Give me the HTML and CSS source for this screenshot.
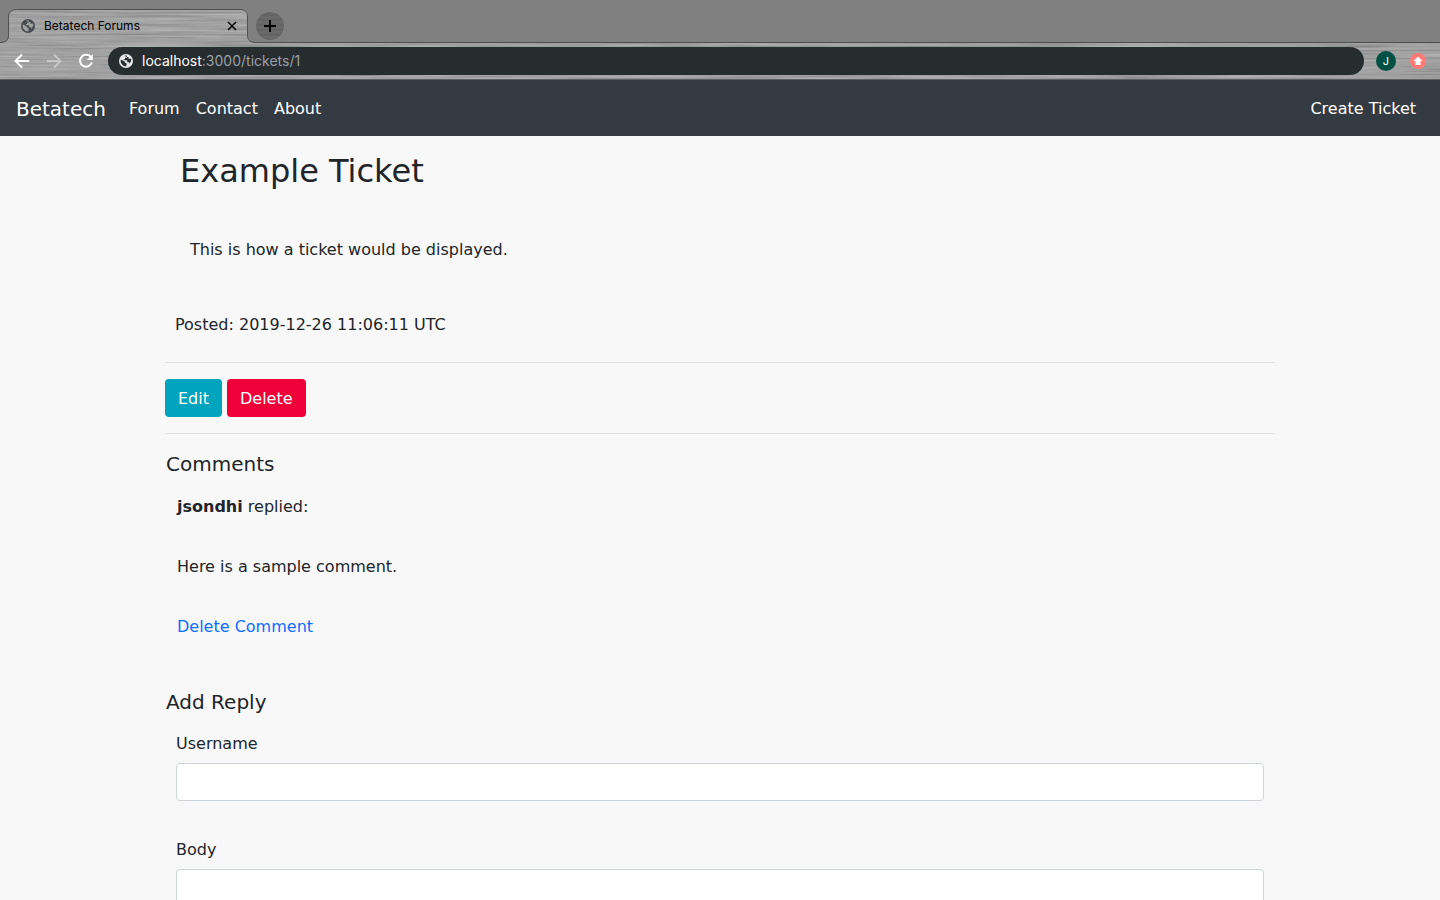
FILE: index.html
```html
<!DOCTYPE html>
<html lang="en">
<head>
<meta charset="utf-8">
<title>Betatech Forums</title>
<link rel="stylesheet" href="styles.css">
</head>
<body>
<div class="browser">
  <header class="chrome">
    <svg class="metal" aria-hidden="true">
      <filter id="brushed" x="0" y="0" width="100%" height="100%">
        <feTurbulence type="fractalNoise" baseFrequency="0.01 0.5" numOctaves="3" seed="4"/>
        <feColorMatrix type="matrix" values="0.34 0 0 0 0.38  0.34 0 0 0 0.38  0.34 0 0 0 0.38  0 0 0 0 1" color-interpolation-filters="sRGB"/>
      </filter>
      <rect width="100%" height="100%" filter="url(#brushed)"/>
    </svg>
    <div class="tabstrip">
      <div class="tab">
        <svg class="tab-shape" viewBox="0 0 256 34" aria-hidden="true">
          <path class="tab-cut" d="M0 0H256V33.5C251 33.5 248 31 248 26V8C248 3 245 .5 240 .5H17C12 .5 9 3 9 8V26C9 31 6 33.5 0 33.5Z"/>
          <path class="tab-line" d="M0 33.5C6 33.5 8.5 31 8.5 26V8C8.5 3 11.5 .5 16.5 .5H240C245 .5 247.5 3 247.5 8V26C247.5 31 250 33.5 256 33.5"/>
        </svg>
        <div class="tab-content">
          <svg class="globe" viewBox="0 0 14 14" aria-hidden="true"><circle cx="7" cy="7" r="7" fill="#494c51"/><path d="M2 5.5 5.5 7.5 6.5 9H7.5V12.3C4.5 12.5 1.8 10.2 1.6 7ZM5.2 1.9C7 1.2 8 1.4 8 1.9V3.8H6V5.2H4.8V6.3H8.2V8.2H10.2V9.8C11.9 8.4 12.6 6.5 12.1 4.8H9.6V3.3" fill="#a3a3a3"/></svg>
          <span class="tab-title">Betatech Forums</span>
          <button class="close" aria-label="Close tab"><svg viewBox="0 0 10 10"><path d="M1 1 9 9M9 1 1 9"/></svg></button>
        </div>
      </div>
      <div class="strip-rest">
        <button class="new-tab" aria-label="New tab"><svg viewBox="0 0 12 12"><path d="M6 0V12M0 6H12"/></svg></button>
      </div>
    </div>
    <div class="toolbar">
      <button class="tool" aria-label="Back"><svg viewBox="0 0 16 16"><path d="M15 8H2M8 1.5 1.5 8 8 14.5"/></svg></button>
      <button class="tool faded" aria-label="Forward"><svg viewBox="0 0 16 16"><path d="M1 8H14M8 1.5 14.5 8 8 14.5"/></svg></button>
      <button class="tool" aria-label="Reload"><svg viewBox="0 0 16 16"><path d="M13 4.2A6 6 0 1 0 13.8 9.5"/><path class="solid" d="M14.8 1V7H8.8Z"/></svg></button>
      <div class="address">
        <svg class="globe" viewBox="0 0 14 14" aria-hidden="true"><circle cx="7" cy="7" r="7" fill="#e8eaed"/><path d="M2 5.5 5.5 7.5 6.5 9H7.5V12.3C4.5 12.5 1.8 10.2 1.6 7ZM5.2 1.9C7 1.2 8 1.4 8 1.9V3.8H6V5.2H4.8V6.3H8.2V8.2H10.2V9.8C11.9 8.4 12.6 6.5 12.1 4.8H9.6V3.3" fill="#272c2f"/></svg>
        <span class="url">localhost<span class="path">:3000/tickets/1</span></span>
      </div>
      <button class="avatar" aria-label="Profile">J</button>
      <button class="update" aria-label="Update"><svg viewBox="0 0 16 16"><path d="M8 3.5 12.5 8H10.5V12H5.5V8H3.5Z"/></svg></button>
    </div>
  </header>
  <nav class="navbar">
    <a class="brand" href="#">Betatech</a>
    <a href="#">Forum</a>
    <a href="#">Contact</a>
    <a href="#">About</a>
    <a class="create" href="#">Create Ticket</a>
  </nav>
  <main class="page">
    <div class="container">
      <h1>Example Ticket</h1>
      <p class="ticket-body">This is how a ticket would be displayed.</p>
      <p class="posted">Posted: 2019-12-26 11:06:11 UTC</p>
      <div class="actions">
        <button class="btn edit">Edit</button>
        <button class="btn delete">Delete</button>
      </div>
      <h2>Comments</h2>
      <article class="comment">
        <p><strong>jsondhi</strong> replied:</p>
        <p>Here is a sample comment.</p>
        <p><a href="#">Delete Comment</a></p>
      </article>
      <h2>Add Reply</h2>
      <form class="reply">
        <label for="username">Username</label>
        <input id="username" type="text">
        <label for="body">Body</label>
        <textarea id="body" rows="3"></textarea>
      </form>
    </div>
  </main>
</div>
</body>
</html>
```
FILE: styles.css
```css
* { box-sizing: border-box; }
body {
  margin: 0;
  background: #f8f8f8;
  color: #212529;
  font: 16px/24px Verdana, "DejaVu Sans", sans-serif;
}
button { border: 0; padding: 0; background: none; font: inherit; color: inherit; }
p, h1, h2 { margin: 0; font-weight: 400; }

.browser { display: flex; flex-direction: column; height: 100vh; overflow: hidden; }

/* Browser frame */
.chrome {
  position: relative;
  flex: none;
  border-bottom: 1px solid #5d5e5f;
  background: #959595;
  font-family: Inter, Roboto, sans-serif;
}
.metal { position: absolute; inset: 0; width: 100%; height: 100%; }
.tabstrip { position: relative; display: flex; height: 43px; }
.tab { position: relative; width: 256px; border-top: 9px solid #808080; }
.tab-shape { position: absolute; inset: 0; width: 256px; height: 34px; }
.tab-cut { fill: #808080; }
.tab-line { fill: none; stroke: #4e4e4e; }
.tab-content { position: relative; display: flex; align-items: center; height: 34px; padding: 0 18px 0 21px; }
.globe { width: 14px; height: 14px; }
.tab-title { flex: 1; margin-left: 9px; font-size: 12px; line-height: 16px; color: #000; }
.close, .close svg { display: block; width: 10px; height: 10px; }
.close { margin-right: 1px; }
.close path, .new-tab path { fill: none; stroke: #000; stroke-width: 2; }
.close path { stroke-width: 1.5; }
.strip-rest { flex: 1; padding-top: 12px; background: #808080; border-bottom: 1px solid #4e4e4e; }
.new-tab { display: grid; place-items: center; width: 28px; height: 28px; border-radius: 50%; background: repeating-linear-gradient(#696969 0 2px, #646464 2px 4px, #6b6b6b 4px 5px); }
.new-tab svg { width: 12px; height: 12px; }
.toolbar { position: relative; display: flex; align-items: center; gap: 16px; height: 36px; padding: 0 14px; }
.tool, .tool svg { display: block; width: 16px; height: 16px; }
.tool path { fill: none; stroke: #fff; stroke-width: 2; }
.tool .solid { fill: #fff; stroke: none; }
.faded { opacity: .4; }
.address { flex: 1; display: flex; align-items: center; height: 28px; margin: 0 -4px 0 -2px; padding: 0 11px; border-radius: 14px; background: #272c2f; }
.url { margin-left: 9px; font-size: 14px; line-height: 20px; color: #fff; }
.path { color: #9aa0a6; }
.avatar { width: 20px; height: 20px; border-radius: 50%; background: #005043; color: #fff; font-size: 11px; line-height: 20px; text-align: center; }
.update { width: 16px; height: 16px; margin-left: -2px; border-radius: 50%; background: #ff7b78; }
.update svg { display: block; fill: #fff; }

/* Site navigation */
.navbar { flex: none; display: flex; align-items: center; gap: 16px; height: 56px; padding: 2px 24px 0 16px; background: #343a42; }
.navbar a { color: #fff; text-decoration: none; }
.navbar .brand { margin-right: 7px; font-size: 20px; }
.navbar .create { margin-left: auto; }

/* Ticket */
.page { flex: 1; min-height: 0; overflow: hidden; }
.container { max-width: 1140px; margin: 0 auto; padding: 0 15px; }
h1 { padding: 15px 15px 0; font-size: 32px; line-height: 40px; }
h2 { padding-left: 1px; font-size: 20px; line-height: 24px; }
.ticket-body { padding: 47px 25px 0; }
.posted { padding: 51px 10px 25px; }
.actions { display: flex; gap: 5px; padding: 16px 0; margin-bottom: 18px; border: 1px solid #dfdfdf; border-width: 1px 0; }
.btn { height: 38px; padding: 2px 13px 0; border-radius: 4px; color: #fff; }
.edit { background: #00a5bd; }
.delete { background: #ef0038; }
.comment { display: grid; gap: 36px; padding: 19px 12px 51px; }
.comment a { color: #0d6efd; text-decoration: none; }
.reply { display: flex; flex-direction: column; padding: 18px 11px; }
.reply label { margin-bottom: 7px; }
.reply input, .reply textarea { width: 100%; padding: 6px 12px; border: 1px solid #ced4da; border-radius: 4px; background: #fff; font: inherit; }
.reply input { height: 38px; margin-bottom: 37px; }
.reply textarea { resize: none; }
```
